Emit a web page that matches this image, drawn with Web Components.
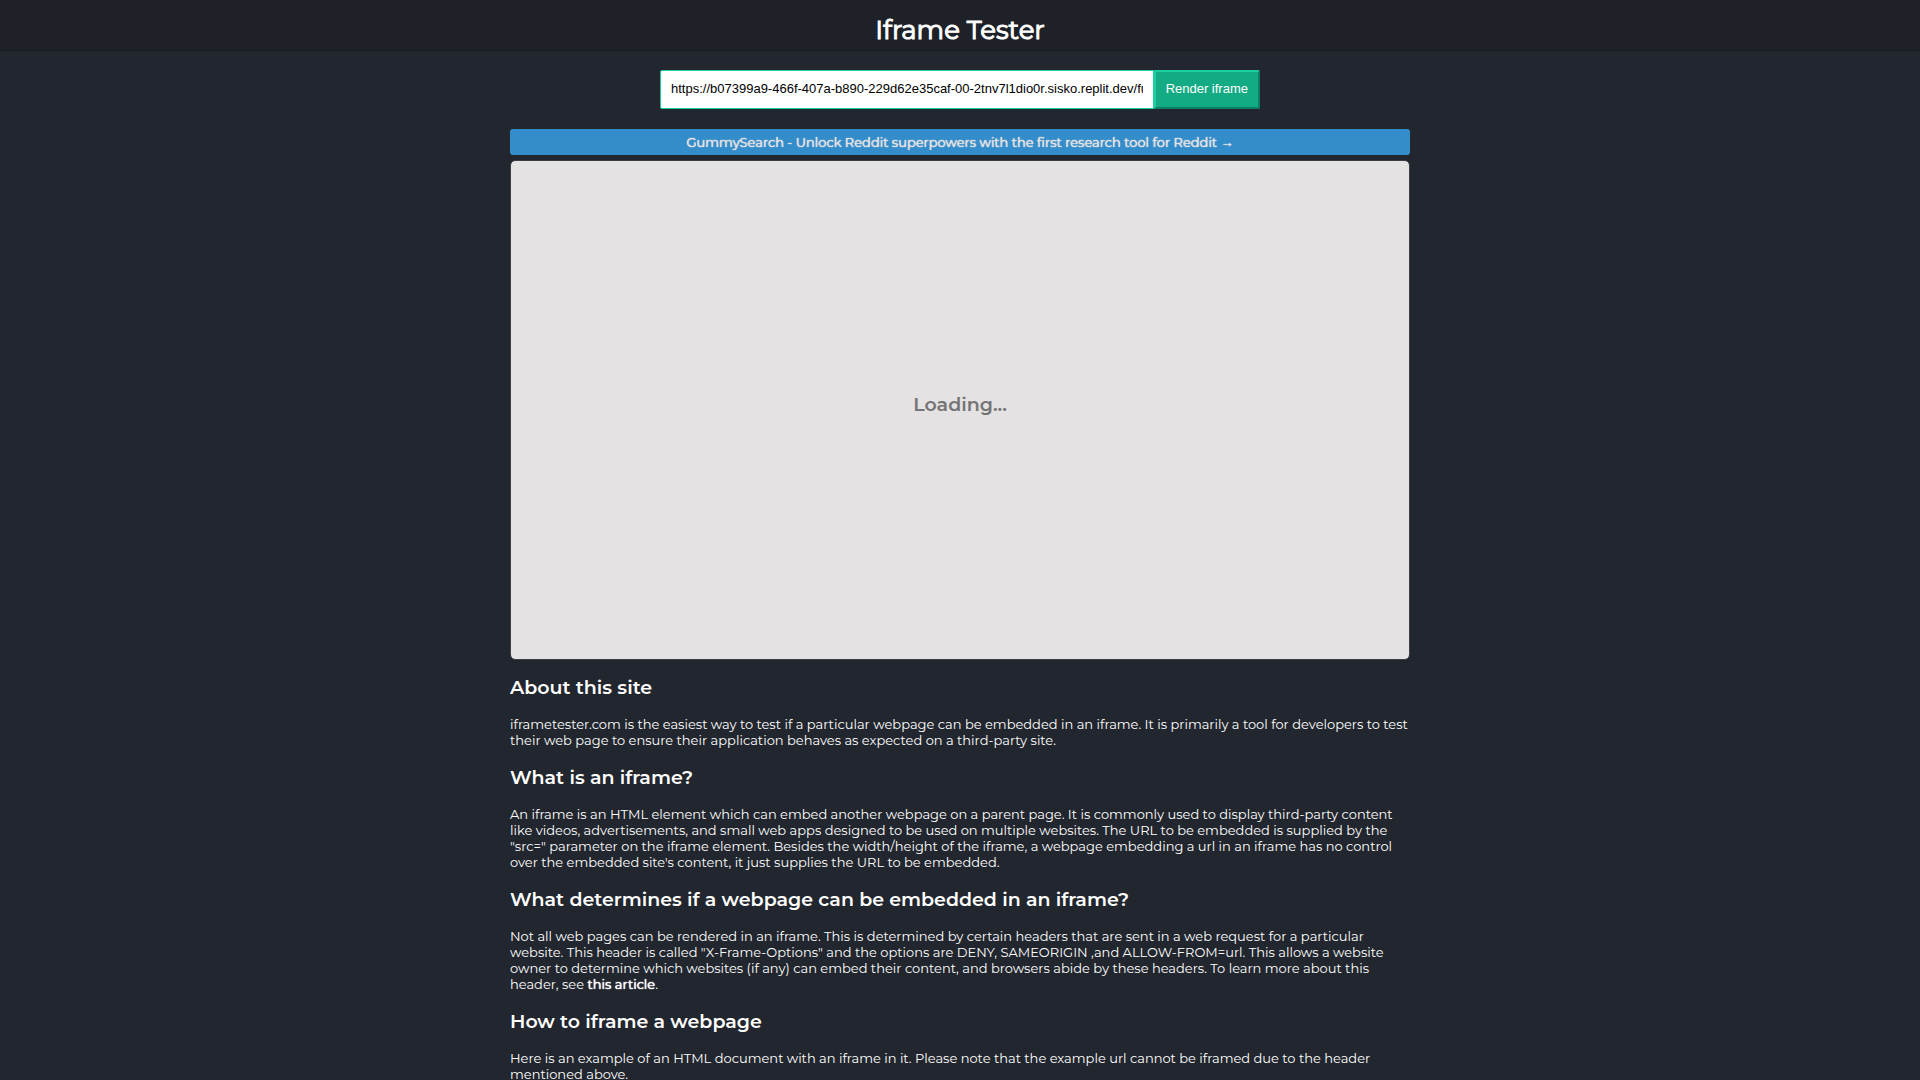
<!DOCTYPE html>
<html lang="en">
<head>
<meta charset="utf-8">
<title>Iframe Tester</title>
<style>
  html { background: #22262e; }
  body {
    margin: 0;
    color: #fff;
    font: 13px/16px Montserrat, "Liberation Sans", sans-serif;
  }
  main { max-width: 900px; margin: 0 auto; }
  .arrow { font-family: "Liberation Sans", sans-serif; line-height: 1px; }
</style>
</head>
<body>
<site-header>Iframe Tester</site-header>
<main>
  <url-form value="https://b07399a9-466f-407a-b890-229d62e35caf-00-2tnv7l1dio0r.sisko.replit.dev/functions"></url-form>
  <promo-banner href="#gummysearch">GummySearch - Unlock Reddit superpowers with the first research tool for Reddit <span class="arrow">→</span></promo-banner>
  <frame-preview>Loading...</frame-preview>
  <info-section heading="About this site">iframetester.com is the easiest way to test if a particular webpage can be embedded in an iframe. It is primarily a tool for developers to test their web page to ensure their application behaves as expected on a third-party site.</info-section>
  <info-section heading="What is an iframe?">An iframe is an HTML element which can embed another webpage on a parent page. It is commonly used to display third-party content like videos, advertisements, and small web apps designed to be used on multiple websites. The URL to be embedded is supplied by the "src=" parameter on the iframe element. Besides the width/height of the iframe, a webpage embedding a url in an iframe has no control over the embedded site's content, it just supplies the URL to be embedded.</info-section>
  <info-section heading="What determines if a webpage can be embedded in an iframe?">Not all web pages can be rendered in an iframe. This is determined by certain headers that are sent in a web request for a particular website. This header is called "X-Frame-Options" and the options are DENY, SAMEORIGIN ,and ALLOW-FROM=url. This allows a website owner to determine which websites (if any) can embed their content, and browsers abide by these headers. To learn more about this header, see <text-link href="#article">this article</text-link>.</info-section>
  <info-section heading="How to iframe a webpage">Here is an example of an HTML document with an iframe in it. Please note that the example url cannot be iframed due to the header mentioned above.</info-section>
</main>
<script>
  const define = (name, html, setup) => {
    const template = document.createElement('template');
    template.innerHTML = html;
    customElements.define(name, class extends HTMLElement {
      constructor() {
        super();
        this.attachShadow({ mode: 'open' }).append(template.content.cloneNode(true));
      }
      connectedCallback() {
        if (setup) setup(this, this.shadowRoot);
      }
    });
  };

  define('site-header', `
    <style>
      :host { display: block; }
      header { padding: 12px 0 2px; background: #1e2128; border-bottom: 1px solid #1a1c22; }
      h1 { margin: 0; font-size: 26px; line-height: 36px; font-weight: 400;
        text-align: center; -webkit-text-stroke: 1px; }
    </style>
    <header><h1><slot></slot></h1></header>`);

  define('url-form', `
    <style>
      :host { display: block; padding: 19px 0 20px; }
      form { display: flex; max-width: 600px; height: 39px; margin: 0 auto; }
      input, button { box-sizing: border-box; margin: 0; font: 13px "Liberation Sans", Arial, sans-serif; }
      input { flex: 1; min-width: 0; padding: 0 10px 2px; color: #000; background: #fff;
        border: 1px solid #1ccf9e; border-radius: 2px 0 0 2px; outline: 0; }
      button { padding: 0 10px 2px; color: #fff; background: #12ab83; border: 2px solid;
        border-color: #1ccf9e #0f7f63 #0f7f63 #1ccf9e; border-radius: 0 2px 2px 0; }
    </style>
    <form onsubmit="return false">
      <input type="text" aria-label="URL">
      <button type="submit">Render iframe</button>
    </form>`, (host, root) => {
      root.querySelector('input').value = host.getAttribute('value');
    });

  define('promo-banner', `
    <style>
      :host { display: block; }
      a { display: block; padding: 5px 0; color: #e4e2e3; background: #338dcb; border-radius: 3px;
        text-align: center; text-decoration: none; text-shadow: 0 0 1px, 0 0 1px; }
    </style>
    <a><slot></slot></a>`, (host, root) => {
      root.querySelector('a').href = host.getAttribute('href');
    });

  define('frame-preview', `
    <style>
      :host { display: flex; box-sizing: border-box; height: 500px; margin: 5px 0 16px; padding-bottom: 10px;
        align-items: center; justify-content: center; color: #757475; background: #e4e2e3;
        border: 1px solid #3b3e45; border-radius: 5px; background-clip: padding-box;
        font-size: 19px; line-height: 24px; font-weight: 600; }
    </style>
    <slot></slot>`);

  define('info-section', `
    <style>
      :host { display: block; margin-bottom: 18px; }
      h2 { margin: 0 0 16px; font-size: 19px; line-height: 24px; font-weight: 600; }
      p { margin: 0; }
    </style>
    <section><h2></h2><p><slot></slot></p></section>`, (host, root) => {
      root.querySelector('h2').textContent = host.getAttribute('heading');
    });

  define('text-link', `
    <style>
      :host { display: inline; }
      a { color: #fff; text-decoration: none; text-shadow: 0 0 1px, 0 0 1px; }
    </style>
    <a><slot></slot></a>`, (host, root) => {
      root.querySelector('a').href = host.getAttribute('href');
    });
</script>
</body>
</html>
